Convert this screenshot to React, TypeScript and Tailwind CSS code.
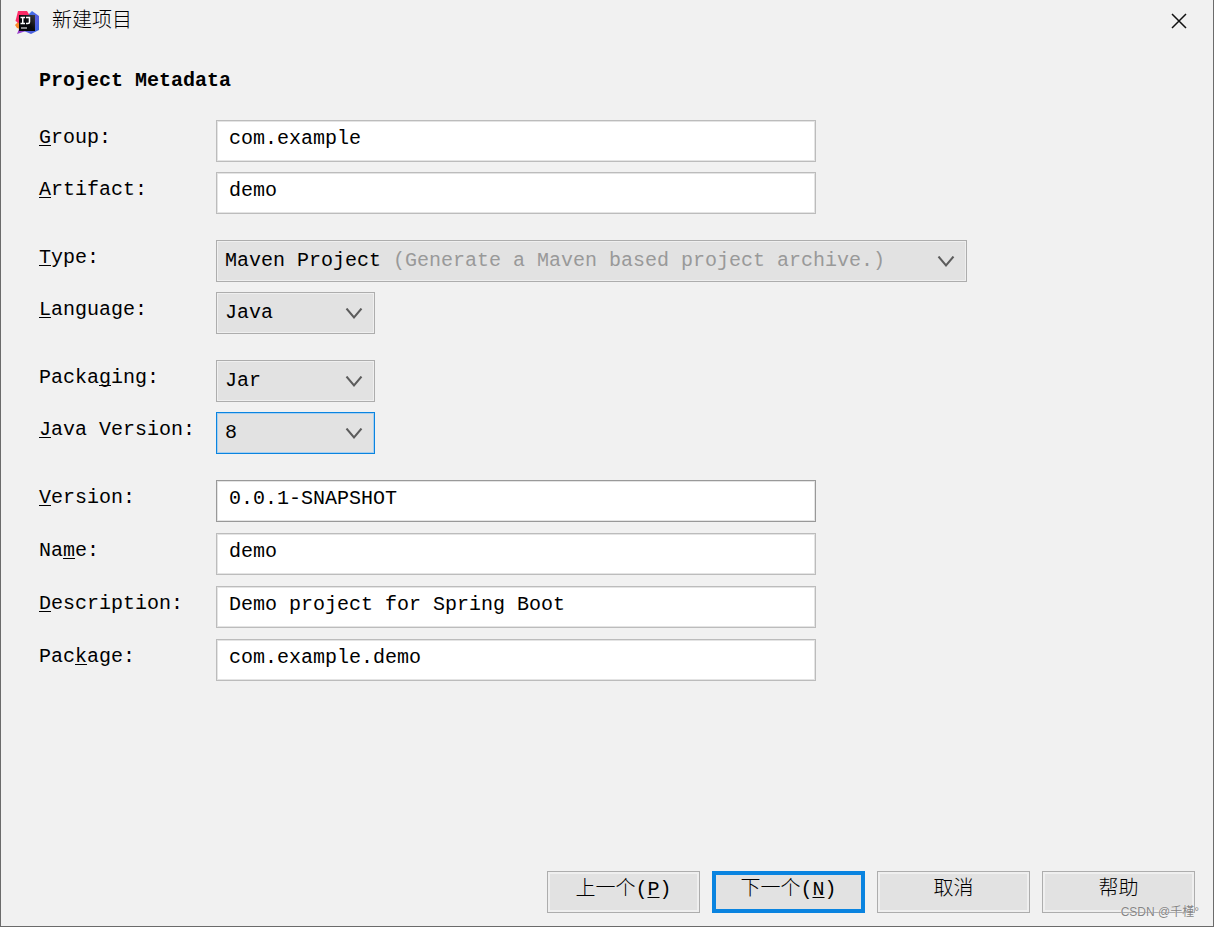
import { useState } from "react"
import type { ReactNode } from "react"

type LabelProps = {
  id: string
  text: string
  mnemonic: number
}

function Mnemonic({ text, index }: { text: string; index: number }) {
  return (
    <>
      {text.slice(0, index)}
      <span className="underline decoration-1 underline-offset-2 [text-decoration-skip-ink:none]">
        {text[index]}
      </span>
      {text.slice(index + 1)}
    </>
  )
}

function Row({ id, text, mnemonic, children }: LabelProps & { children: ReactNode }) {
  return (
    <div className="flex items-start">
      <label htmlFor={id} className="w-[177px] shrink-0 leading-9 whitespace-pre">
        <Mnemonic text={text} index={mnemonic} />
      </label>
      {children}
    </div>
  )
}

function TextRow({ initial, strong, ...label }: LabelProps & { initial: string; strong?: boolean }) {
  const [value, setValue] = useState(initial)

  return (
    <Row {...label}>
      <input
        id={label.id}
        type="text"
        value={value}
        spellCheck={false}
        onChange={(e) => setValue(e.target.value)}
        className={`h-[42px] w-full max-w-[600px] min-w-0 border bg-white pl-3 pr-2 pb-1.5 outline-none shadow-[inset_0_0_0_1px_#e4e4e4] focus:border-[#0a84e0] ${
          strong ? "border-[#999999]" : "border-[#bcbcbc]"
        }`}
      />
    </Row>
  )
}

function SelectRow({
  options,
  hint,
  active,
  ...label
}: LabelProps & { options: readonly string[]; hint?: string; active?: boolean }) {
  return (
    <Row {...label}>
      <div className={`relative w-full min-w-0 ${hint ? "max-w-[751px]" : "max-w-[159px]"}`}>
        <select
          id={label.id}
          defaultValue={options[0]}
          className={`block h-[42px] w-full appearance-none border bg-[#e2e2e2] pl-2 pr-8 outline-none ${
            active
              ? "border-[#0a84e0] shadow-[inset_0_0_0_1px_#a9cfee]"
              : "border-[#adadad] shadow-[inset_0_0_0_1px_#efefef]"
          }`}
        >
          {options.map((o) => (
            <option key={o}>{o}</option>
          ))}
        </select>
        {hint && (
          <span className="pointer-events-none absolute inset-y-0 left-[177px] leading-[42px] whitespace-nowrap text-[#999999]">
            {hint}
          </span>
        )}
        <svg
          viewBox="0 0 18 12"
          className="pointer-events-none absolute right-3 top-4 h-3 w-[18px]"
          fill="none"
          stroke="#5c5c5c"
          strokeWidth="2"
        >
          <path d="M1.5 0.500 L9 9.500 L16.500 0.500" />
        </svg>
      </div>
    </Row>
  )
}

function DialogButton({ children, primary }: { children: ReactNode; primary?: boolean }) {
  return (
    <button
      type="button"
      className={`h-[42px] w-[153px] bg-[#e2e2e2] ${
        primary
          ? "border-4 border-[#0a84e0] pb-1"
          : "border border-[#adadad] pb-1 shadow-[inset_0_0_0_2px_#efefef]"
      }`}
    >
      {children}
    </button>
  )
}

function IdeaLogo() {
  return (
    <svg viewBox="0 0 25 25" className="size-[25px]" aria-hidden="true">
      <defs>
        <linearGradient id="idea-blue" x1="0" y1="0" x2="1" y2="1">
          <stop offset="0" stopColor="#2f7df0" />
          <stop offset="0.6" stopColor="#5a5fe0" />
          <stop offset="1" stopColor="#2b62dc" />
        </linearGradient>
        <linearGradient id="idea-red" x1="0" y1="0" x2="1" y2="1">
          <stop offset="0" stopColor="#fe2d6b" />
          <stop offset="1" stopColor="#f5265c" />
        </linearGradient>
        <linearGradient id="idea-purple" x1="0" y1="0" x2="1" y2="1">
          <stop offset="0" stopColor="#c931b4" />
          <stop offset="1" stopColor="#6a4be0" />
        </linearGradient>
        <linearGradient id="idea-black" x1="0" y1="1" x2="1" y2="0">
          <stop offset="0.5" stopColor="#08080a" />
          <stop offset="1" stopColor="#3c3c42" />
        </linearGradient>
      </defs>
      <path d="M13 5 L17 1 L24 6 L24 20 L16 24 L9 21 Z" fill="url(#idea-blue)" />
      <path d="M2 12 L4 19 L2 24 L14 20 Z" fill="url(#idea-purple)" />
      <path d="M0 15 L4 11 L5 19 L2 18 Z" fill="#fb8a28" />
      <path d="M3 1 L12 1 L15 6 L5 14 L0.500 11 Z" fill="url(#idea-red)" />
      <path d="M4 5 H20 V21 H4 Z" fill="url(#idea-black)" />
      <path
        d="M5.500 7.500 H10 M7.750 7.500 V13.500 M5.500 13.500 H10 M11 7.500 H14.500 V12 Q14.500 13.500 13 13.500 H11"
        fill="none"
        stroke="#fff"
        strokeWidth="1.5"
      />
      <path d="M6 18 H12" stroke="#ddd" strokeWidth="1.2" />
    </svg>
  )
}

export default function App() {
  return (
    <div className="relative flex min-h-screen flex-col border-x border-b border-[#6b6b6b] bg-[#f1f1f1] font-['Liberation_Mono','Noto_Sans_CJK_SC',monospace] text-[20px] text-black">
      <header className="flex h-[42px] items-start justify-between pl-3.5 pr-6">
        <div className="flex items-start gap-3">
          <div className="pt-2.5">
            <IdeaLogo />
          </div>
          <h1 className="font-['Noto_Sans_CJK_SC',sans-serif] font-light leading-[38px]">新建项目</h1>
        </div>
        <button type="button" aria-label="关闭" className="flex h-[42px] w-5 items-center justify-center">
          <svg viewBox="0 0 16 16" className="size-4" stroke="#111" strokeWidth="1.5">
            <path d="M1 1 L15 15 M15 1 L1 15" />
          </svg>
        </button>
      </header>

      <main className="flex-1 px-[38px] pt-[21px]">
        <h2 className="font-bold leading-9">Project Metadata</h2>

        <form className="mt-[21px] flex flex-col gap-[26px]">
          <div className="flex flex-col gap-2.5">
            <TextRow id="group" text="Group:" mnemonic={0} initial="com.example" />
            <TextRow id="artifact" text="Artifact:" mnemonic={0} initial="demo" />
          </div>
          <div className="flex flex-col gap-2.5">
            <SelectRow
              id="type"
              text="Type:"
              mnemonic={0}
              options={["Maven Project"]}
              hint="(Generate a Maven based project archive.)"
            />
            <SelectRow id="language" text="Language:" mnemonic={0} options={["Java"]} />
          </div>
          <div className="flex flex-col gap-2.5">
            <SelectRow id="packaging" text="Packaging:" mnemonic={5} options={["Jar"]} />
            <SelectRow id="java-version" text="Java Version:" mnemonic={0} options={["8"]} active />
          </div>
          <div className="flex flex-col gap-[11px]">
            <TextRow id="version" text="Version:" mnemonic={0} initial="0.0.1-SNAPSHOT" strong />
            <TextRow id="name" text="Name:" mnemonic={2} initial="demo" />
            <TextRow id="description" text="Description:" mnemonic={0} initial="Demo project for Spring Boot" />
            <TextRow id="package" text="Package:" mnemonic={3} initial="com.example.demo" />
          </div>
        </form>
      </main>

      <footer className="flex justify-end gap-3 pr-[18px] pb-[13px]">
        <DialogButton>
          <span className="font-light">上一个</span>(<Mnemonic text="P" index={0} />)
        </DialogButton>
        <DialogButton primary>
          <span className="font-light">下一个</span>(<Mnemonic text="N" index={0} />)
        </DialogButton>
        <DialogButton>
          <span className="font-light">取消</span>
        </DialogButton>
        <DialogButton>
          <span className="font-light">帮助</span>
        </DialogButton>
      </footer>

      <span className="pointer-events-none absolute right-3.5 bottom-1 font-['Liberation_Sans','Noto_Sans_CJK_SC',sans-serif] text-xs leading-5 text-[#858585] [text-shadow:0_0_1px_#fff]">
        CSDN @千槿°
      </span>
    </div>
  )
}
